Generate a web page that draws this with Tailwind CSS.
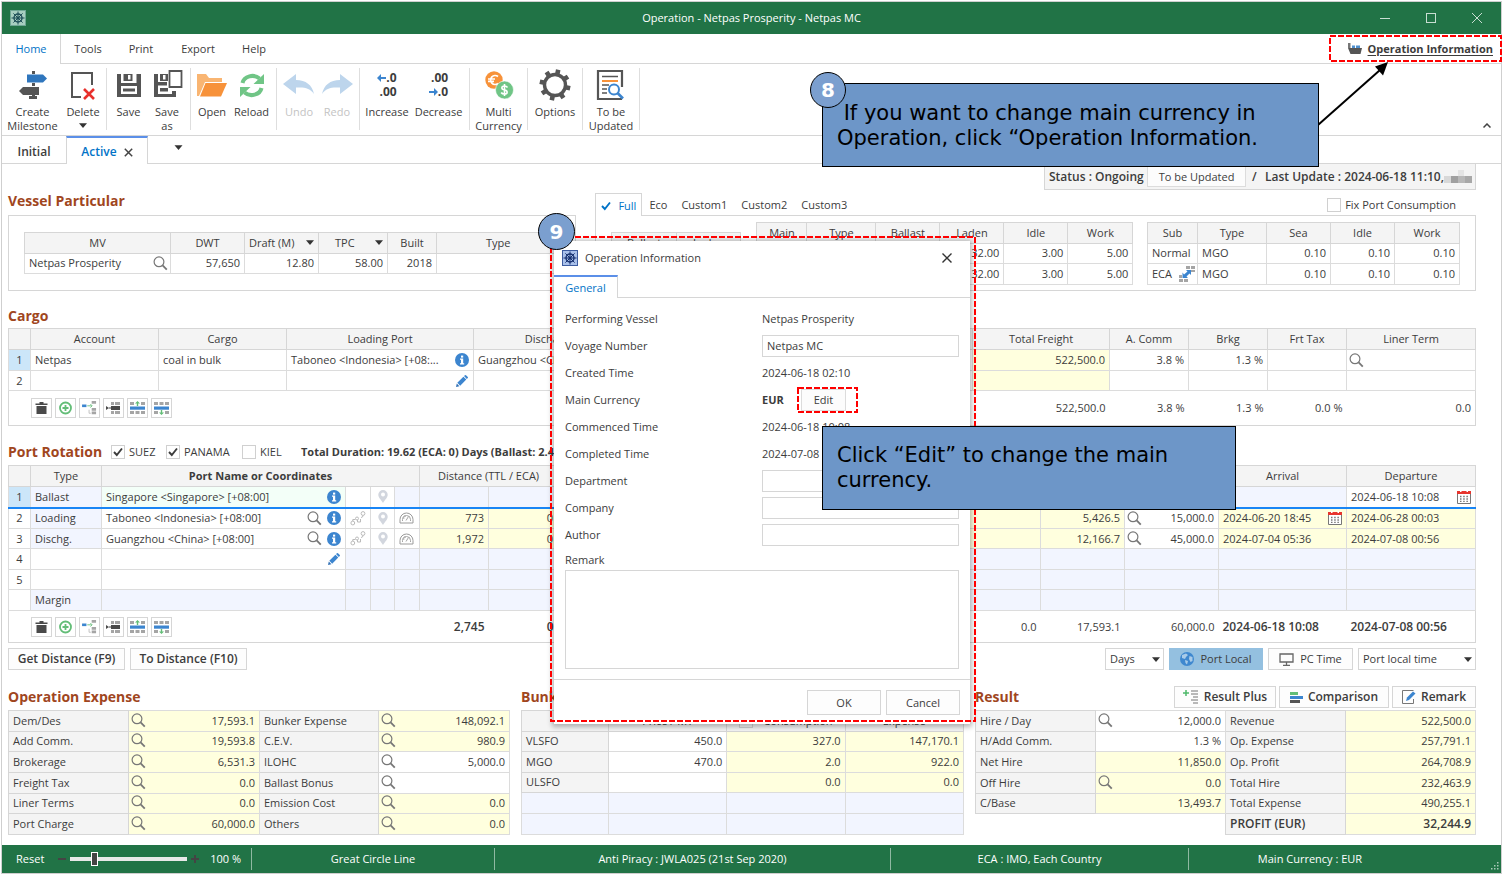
<!DOCTYPE html>
<html lang="en">
<head>
<meta charset="utf-8">
<meta name="viewport" content="width=device-width, initial-scale=1">
<title>Operation - Netpas Prosperity - Netpas MC</title>
<script src="https://cdn.jsdelivr.net/npm/@tailwindcss/browser@4"></script>
</head>
<body class="bg-white font-['Open_Sans','Noto_Sans',sans-serif] text-[11px] leading-4 text-[#3c3c3c]">

<!-- Shared icons -->
<svg class="hidden" aria-hidden="true">
  <symbol id="search" viewBox="0 0 15 15"><circle cx="6" cy="5.8" r="4.9" fill="none" stroke="#777" stroke-width="1.2"/><path d="M9.6 9.4l4.2 4.3" stroke="#777" stroke-width="1.8" fill="none"/></symbol>
  <symbol id="info" viewBox="0 0 14 14"><circle cx="7" cy="7" r="7" fill="#3c85cf"/><rect x="6" y="2.6" width="2.2" height="2" fill="#fff"/><path d="M5 5.6h3.2v4.6h1v1.2H5v-1.2h1V6.8H5z" fill="#fff"/></symbol>
  <symbol id="pencil" viewBox="0 0 12 12"><path d="M0 12l.8-3.4L3.4 11.200z" fill="#2f6fb5"/><path d="M1.300 7.800L7.400 1.700l2.900 2.900-6.100 6.100zM8 1.100L9 .2q.5-.4 1 0l1.800 1.800q.4.500 0 1l-1 1z" fill="#3c85cf"/></symbol>
  <symbol id="trash" viewBox="0 0 14 14"><path d="M5 1h4v1.500h4V4H1V2.500h4zM2 5h10v8H2z" fill="#4a4a4a"/></symbol>
  <symbol id="plus" viewBox="0 0 14 14"><circle cx="7" cy="7" r="5.500" fill="none" stroke="#63bd77" stroke-width="1.800"/><path d="M7 4v6M4 7h6" stroke="#63bd77" stroke-width="1.800"/></symbol>
  <symbol id="split" viewBox="0 0 17 16"><path d="M0 4h5v3H0z" fill="#3c85cf"/><path d="M6 5.500h5M9.500 3.500l2 2-2 2" stroke="#63bd77" fill="none"/><path d="M11 0h5v3h-5zM11 8h5v3h-5zM11 12h5v3h-5z" fill="#a5a5a5"/><path d="M8 10v4h2" stroke="#bbb" fill="none"/></symbol>
  <symbol id="insrow" viewBox="0 0 15 14"><path d="M5 1h3v3H5zM9 1h5v3H9zM5 10h3v3H5zM9 10h5v3H9z" fill="#a5a5a5"/><path d="M5 5h9v4H5z" fill="#4a4a4a"/><path d="M0 5l3 2-3 2zM3 6.500h2v1H3z" fill="#4a4a4a"/></symbol>
  <symbol id="rowup" viewBox="0 0 15 14"><path d="M0 1h4v3H0zM11 1h4v3h-4zM0 10h4v3H0zM5.500 10h4v3h-4zM11 10h4v3h-4z" fill="#a5a5a5"/><path d="M0 5.500h15v3.200H0z" fill="#3c85cf"/><path d="M7.500 0L10 2.500H8.200V5H6.800V2.500H5z" fill="#63bd77"/></symbol>
  <symbol id="rowdown" viewBox="0 0 15 14"><path d="M0 10h4v3H0zM11 10h4v3h-4zM0 1h4v3H0zM5.500 1h4v3h-4zM11 1h4v3h-4z" fill="#a5a5a5"/><path d="M0 5.500h15v3.200H0z" fill="#3c85cf"/><path d="M7.500 14L10 11.500H8.200V9H6.800v2.500H5z" fill="#63bd77"/></symbol>
  <symbol id="route" viewBox="0 0 16 15"><circle cx="2.800" cy="12" r="1.900" fill="none" stroke="#bbb"/><circle cx="7" cy="7.500" r="1.500" fill="none" stroke="#bbb"/><circle cx="13" cy="2.500" r="1.900" fill="none" stroke="#bbb"/><path d="M2.800 10V8.500h2.500M7.500 9v2h3V8M11 6.500q2 0 2-2" fill="none" stroke="#bbb"/></symbol>
  <symbol id="pin" viewBox="0 0 10 13"><path d="M5 0a4.700 4.700 0 0 1 4.700 4.700C9.700 7.500 7 9.500 5 13 3 9.500.3 7.500.3 4.700A4.700 4.700 0 0 1 5 0z" fill="#d2d6de"/><circle cx="5" cy="4.600" r="2" fill="#fff"/></symbol>
  <symbol id="gauge" viewBox="0 0 15 12"><path d="M1 11V7.500a6.500 6.500 0 0 1 13 0V11z" fill="none" stroke="#9b9b9b"/><path d="M3.500 9V7.500a4 4 0 0 1 8 0V9M7 8.500L9.500 4.500M6 3v2M3.500 6h2" fill="none" stroke="#a5a5a5"/></symbol>
  <symbol id="cal" viewBox="0 0 14 14"><path d="M.5 4v9.500h13V4" fill="#fff" stroke="#777"/><path d="M0 1h14v3H0z" fill="#e8352e"/><path d="M3 0h1.500v2H3zM9.500 0H11v2H9.500z" fill="#fff"/><path d="M3 6.500h8M3 9h8M3 11.300h8" stroke="#777" stroke-width="1.300" stroke-dasharray="1.500 1.700"/></symbol>
  <symbol id="tri" viewBox="0 0 8 5"><path d="M0 .3h8L4 5z" fill="#333"/></symbol>
  <symbol id="check" viewBox="0 0 10 10"><path d="M1 5l2.800 3L9 1.500" fill="none" stroke="currentColor" stroke-width="1.900"/></symbol>
  <symbol id="wheel" viewBox="0 0 16 16"><rect x=".5" y=".5" width="15" height="15" fill="#a9c0ea" stroke="#3d5ca0"/><circle cx="8" cy="8" r="4" fill="none" stroke="#152f6e" stroke-width="1.400"/><circle cx="8" cy="8" r="1.500" fill="#152f6e"/><path d="M8 1.500v13M1.500 8h13M3.400 3.400l9.200 9.200M12.600 3.400l-9.200 9.200" stroke="#152f6e" stroke-width="1"/></symbol>
  <symbol id="wheelg" viewBox="0 0 16 16"><rect x=".5" y=".5" width="15" height="15" fill="#a7cfc0" stroke="#6fa895"/><circle cx="8" cy="8" r="4" fill="none" stroke="#1d4e57" stroke-width="1.400"/><circle cx="8" cy="8" r="1.500" fill="#1d4e57"/><path d="M8 1.500v13M1.500 8h13M3.400 3.400l9.200 9.200M12.600 3.400l-9.200 9.200" stroke="#1d4e57" stroke-width="1"/></symbol>
</svg>

<div class="relative min-h-screen p-px">
<div class="flex min-h-[873px] flex-col border border-[#cfcfcf]">

  <!-- Title bar -->
  <header class="flex h-8 items-center bg-[#217346] pl-2 pr-[18px] text-white">
    <svg class="size-4"><use href="#wheelg"/></svg>
    <h1 class="flex-1 pl-[98px] text-center">Operation - Netpas Prosperity - Netpas MC</h1>
    <div class="flex gap-[34px]">
      <button aria-label="Minimize"><svg class="size-3" viewBox="0 0 12 12"><path d="M1 6.500h10" stroke="#c9ded2"/></svg></button>
      <button aria-label="Maximize"><svg class="size-3" viewBox="0 0 12 12"><rect x="1.500" y="1.500" width="9" height="9" fill="none" stroke="#c9ded2"/></svg></button>
      <button aria-label="Close"><svg class="size-3" viewBox="0 0 12 12"><path d="M1 1l10 10M11 1L1 11" stroke="#c9ded2"/></svg></button>
    </div>
  </header>

  <!-- Menu -->
  <nav class="flex h-[30px] items-stretch">
    <button class="w-[59px] border-r border-[#d6d6d6] text-[#0173c7]">Home</button>
    <div class="flex flex-1 items-center border-b border-[#d6d6d6] pr-2">
      <button class="w-[54px]">Tools</button>
      <button class="w-[52px]">Print</button>
      <button class="w-[62px]">Export</button>
      <button class="w-[50px]">Help</button>
      <a href="#info" class="ml-auto flex items-center gap-[5px] font-bold underline underline-offset-2">
        <svg class="h-3 w-4" viewBox="0 0 16 12"><path d="M1 5h14l-1.500 6h-10z" fill="#555"/><path d="M1 0h2.500v5H1z" fill="#777"/><path d="M5 2.500h3V5H5zM9 2.500h4V5H9z" fill="#4f90cf"/></svg>Operation Information</a>
    </div>
  </nav>

  <!-- Toolbar -->
  <div class="flex h-[72px] items-start border-b border-[#d6d6d6] leading-[14px] [&>button]:flex [&>button]:flex-col [&>button]:items-center [&>button]:pt-[5px] [&>i]:mx-[3px] [&>i]:mt-1 [&>i]:h-[62px] [&>i]:w-px [&>i]:bg-[#dedede]">
    <button class="w-[61px]"><svg class="mb-1 size-8" viewBox="0 0 32 32"><path d="M15 2h3v3h-3zM15 14h3v3h-3zM15 25h3v3h-3zM12 27h8v3h-8z" fill="#555"/><path d="M10 5.500h16l4 4-4 4H10z" fill="#2f76bd"/><path d="M22 18H6l-4 4 4 4h16z" fill="#555"/></svg>Create<br>Milestone</button>
    <button class="w-10"><svg class="mb-1 size-8" viewBox="0 0 32 32"><path d="M25 16V4H5v24h9" fill="none" stroke="#555" stroke-width="2"/><path d="M17 20l10 10M27 20L17 30" stroke="#e8302c" stroke-width="2.600"/></svg>Delete<svg class="mt-1 h-[5px] w-2"><use href="#tri"/></svg></button>
    <i></i>
    <button class="w-[37px]"><svg class="mb-1 size-8" viewBox="0 0 32 32"><path d="M4 5h24v23H4z" fill="#555"/><path d="M8 5h15.500v9H8z" fill="#fff"/><path d="M10.500 5h9v7h-9z" fill="#555"/><path d="M15 6h2.500v4.500H15z" fill="#fff"/><path d="M8 17h16v8H8z" fill="#fff"/><path d="M10 19.500h12v3H10z" fill="#555"/></svg>Save</button>
    <button class="w-10"><svg class="mb-1 size-8" viewBox="0 0 32 32"><path d="M3 5h13v17h9v6H3z" fill="#555"/><path d="M7 5h9v8H7z" fill="#fff"/><path d="M9 5h8v7H9z" fill="#555"/><path d="M12 6h2.500v4.500H12z" fill="#fff"/><path d="M7 16.500h10V22h4v3H7z" fill="#fff"/><path d="M9 19h8v3.500H9z" fill="#555"/><path d="M17 0h15v20H17z" fill="#fff"/><path d="M18.500 2h12v16h-12z" fill="none" stroke="#555" stroke-width="1.800"/></svg>Save<br>as</button>
    <i></i>
    <button class="w-9"><svg class="mb-1 size-8" viewBox="0 0 32 32"><path d="M1 5h9l3 4h13v4H9L3 27H1z" fill="#f9b572"/><path d="M9.500 14H31l-6 13.500H4z" fill="#f7923a"/></svg>Open</button>
    <button class="w-[43px]"><svg class="mb-1 size-8" viewBox="0 0 32 32"><path d="M6.500 14a10 8.500 0 0 1 17-4.500M25.500 19a10 8.500 0 0 1-17 4.500" fill="none" stroke="#70c586" stroke-width="4"/><path d="M28 5v10H17.500zM4 28V18h10.500z" fill="#70c586"/></svg>Reload</button>
    <i></i>
    <button class="w-[38px] text-[#c3c3c3]"><svg class="mb-1 size-8" viewBox="0 0 32 32"><path d="M0 15L13 5v6c10 0 16 5 18 14-4-6-9-7-18-6.500V25z" fill="#bdd5ec"/></svg>Undo</button>
    <button class="w-[38px] text-[#c3c3c3]"><svg class="mb-1 size-8" viewBox="0 0 32 32"><path d="M32 15L19 5v6C9 11 3 16 1 25c4-6 9-7 18-6.500V25z" fill="#bdd5ec"/></svg>Redo</button>
    <i></i>
    <button class="w-12"><span class="mb-1 flex h-8 flex-col justify-center text-right text-[12px] font-bold"><span class="flex items-center justify-end"><svg class="h-2 w-[9px]" viewBox="0 0 9 8"><path d="M0 4l4-4v3h5v2H4v3z" fill="#3c85cf"/></svg>.0</span><span>.00</span></span>Increase</button>
    <button class="w-[55px]"><span class="mb-1 flex h-8 flex-col justify-center text-right text-[12px] font-bold"><span>.00</span><span class="flex items-center justify-end"><svg class="h-2 w-[9px]" viewBox="0 0 9 8"><path d="M9 4L5 0v3H0v2h5v3z" fill="#3c85cf"/></svg>.0</span></span>Decrease</button>
    <i></i>
    <button class="w-[51px]"><svg class="mb-1 size-8" viewBox="0 0 32 32"><circle cx="11" cy="11" r="8.700" fill="#f7923a"/><path d="M15 7.500a4.500 4.500 0 1 0 0 7M5 10h7M5 12.300h6" fill="none" stroke="#fff" stroke-width="1.700"/><circle cx="21.500" cy="21" r="9" fill="#70c586" stroke="#fff" stroke-width=".6"/><path d="M24.500 18.500q-1-1.500-3-1.500c-3.500 0-3.500 3.500 0 4s3.500 4 0 4q-2.500 0-3.300-1.500M21.500 15v12" fill="none" stroke="#fff" stroke-width="1.600"/></svg>Multi<br>Currency</button>
    <i></i>
    <button class="w-12"><svg class="mb-1 size-8" viewBox="0 0 32 32"><circle cx="16" cy="16" r="10.500" fill="none" stroke="#555" stroke-width="3.400"/><g stroke="#555" stroke-width="4.600"><path d="M16 .5v5M16 26.500v5" transform="rotate(12 16 16)"/><path d="M16 .5v5M16 26.500v5" transform="rotate(57 16 16)"/><path d="M16 .5v5M16 26.500v5" transform="rotate(102 16 16)"/><path d="M16 .5v5M16 26.500v5" transform="rotate(147 16 16)"/></g></svg>Options</button>
    <i></i>
    <button class="w-[50px]"><svg class="mb-1 size-8" viewBox="0 0 32 32"><path d="M27 18V2H3v28h24" fill="none" stroke="#555" stroke-width="2.200"/><path d="M7 7.500h16M7 16h7M7 20h5M7 24h5" stroke="#555" stroke-width="1.600"/><path d="M7 12h16" stroke="#f7923a" stroke-width="2"/><circle cx="19" cy="20.500" r="5" fill="#fff" stroke="#3c85cf" stroke-width="2"/><path d="M22.500 24l5.500 5.500" stroke="#3c85cf" stroke-width="2.600"/></svg>To be<br>Updated</button>
    <i></i>
    <button class="ml-auto mr-[10px] mt-[54px]" aria-label="Collapse ribbon"><svg class="h-[5px] w-2" viewBox="0 0 8 5"><path d="M.5 4.500L4 1l3.500 3.500" fill="none" stroke="#444" stroke-width="1.500"/></svg></button>
  </div>

  <!-- Document tabs -->
  <div class="flex h-7 items-stretch text-[12px] font-bold">
    <button class="w-16 border-b border-[#d6d6d6] pt-1 font-semibold">Initial</button>
    <div class="flex w-[82px] items-center justify-center gap-[7px] border-x border-t-2 border-x-[#d6d6d6] border-t-[#5b8fe8] pt-0.5 text-[#0173c7]"><button class="font-semibold">Active</button><button aria-label="Close tab"><svg class="size-[9px]" viewBox="0 0 9 9"><path d="M.8.8l7.400 7.400M8.200.8L.8 8.200" stroke="#444" stroke-width="1.500"/></svg></button></div>
    <div class="flex flex-1 items-center border-b border-[#d6d6d6] pl-[26px]"><button aria-label="More tabs"><svg class="mb-1 h-[5px] w-[9px]"><use href="#tri"/></svg></button></div>
  </div>

  <main class="flex flex-1 flex-col pl-1.5 pr-[25px]">
    <!-- Status strip -->
    <div class="ml-auto flex h-[26px] w-[432px] items-center border border-t-0 border-[#d6d6d6] bg-[#f4f4f4] pl-1 text-[12px] font-semibold">
      <span class="w-[98px] whitespace-nowrap">Status : Ongoing</span>
      <button class="h-[21px] w-[99px] border border-[#dcdcdc] bg-[#fcfcfc] text-[11px] font-normal">To be Updated</button>
      <span class="w-[19px] pl-1.5">/</span>
      <span class="whitespace-nowrap">Last Update : 2024-06-18 11:10,</span>
      <svg class="h-3.5 w-7" viewBox="0 0 28 14"><path d="M14 0h6v6h-6z" fill="#e4e4e4"/><path d="M0 6h7v7H0z" fill="#d8d8d8"/><path d="M7 6h7v7H7z" fill="#a0a0a0"/><path d="M14 6h7v7h-7z" fill="#b8b8b8"/><path d="M21 6h7v7h-7z" fill="#a8a8a8"/></svg>
    </div>

    <!-- Vessel -->
    <section class="grid grid-cols-[568fr_880fr] gap-x-[19px]">
      <div>
        <h2 class="flex h-[25px] items-center pb-1 text-[14px] font-bold text-[#a0461e]">Vessel Particular</h2>
        <div class="h-[76px] overflow-hidden border border-[#d6d6d6] px-[15px] py-4">
          <table class="h-[42px] w-full table-fixed border-collapse whitespace-nowrap text-right [&_td]:border [&_td]:border-[#dcdcdc] [&_td]:px-1 [&_th]:border [&_th]:border-[#d6d6d6] [&_th]:bg-[#f4f4f4] [&_th]:text-center [&_th]:font-normal">
            <colgroup><col class="w-[146px]"><col class="w-[74px]"><col class="w-[74px]"><col class="w-[69px]"><col class="w-[49px]"><col></colgroup>
            <tr><th>MV</th><th>DWT</th><th><span class="flex items-center justify-between px-1">Draft (M)<svg class="h-[5px] w-2"><use href="#tri"/></svg></span></th><th><span class="flex items-center justify-between pl-4 pr-1">TPC<svg class="h-[5px] w-2"><use href="#tri"/></svg></span></th><th>Built</th><th>Type</th></tr>
            <tr><td><span class="flex items-center justify-between">Netpas Prosperity<svg class="-mr-0.5 size-[15px]"><use href="#search"/></svg></span></td><td>57,650</td><td>12.80</td><td>58.00</td><td>2018</td><td></td></tr>
          </table>
        </div>
      </div>
      <div>
        <div class="flex h-[25px] items-end">
          <button class="relative z-1 -mb-px flex h-[23px] w-[47px] items-center gap-[7px] border border-b-0 border-[#d6d6d6] bg-white pl-[5px] pt-px text-[#0173c7]"><svg class="size-[10px]"><use href="#check"/></svg>Full</button>
          <div class="flex h-[22px] flex-1 items-center gap-[14px] pl-[7px] pt-px"><button>Eco</button><button>Custom1</button><button>Custom2</button><button>Custom3</button>
            <label class="ml-auto mr-5 flex items-center gap-1"><input type="checkbox" class="size-[14px] appearance-none border border-[#d0d0d0]">Fix Port Consumption</label></div>
        </div>
        <div class="flex h-[76px] items-start overflow-hidden border border-[#d6d6d6] pl-[15px] pr-[15px]">
          <table class="mt-4 w-[130px] table-fixed border-collapse [&_td]:border [&_td]:border-[#dcdcdc] [&_th]:border [&_th]:border-[#d6d6d6] [&_th]:bg-[#f4f4f4] [&_th]:font-normal"><tr class="h-[21px]"><th>Ballast</th><th>Laden</th></tr><tr class="h-[21px]"><td></td><td></td></tr></table>
          <table class="ml-[15px] mt-1.5 h-[63px] w-[377px] table-fixed border-collapse text-right [&_td]:border [&_td]:border-[#dcdcdc] [&_td]:px-1 [&_th]:border [&_th]:border-[#d6d6d6] [&_th]:bg-[#f4f4f4] [&_th]:font-normal">
            <colgroup><col class="w-[50px]"><col class="w-[69px]"><col class="w-16"><col class="w-16"><col class="w-16"><col></colgroup>
            <tr><th class="text-center">Main</th><th class="text-center">Type</th><th class="text-center">Ballast</th><th class="text-center">Laden</th><th class="text-center">Idle</th><th class="text-center">Work</th></tr>
            <tr><td></td><td></td><td></td><td>32.00</td><td>3.00</td><td>5.00</td></tr>
            <tr><td></td><td></td><td></td><td>32.00</td><td>3.00</td><td>5.00</td></tr>
          </table>
          <table class="ml-auto mt-1.5 h-[63px] w-[313px] table-fixed border-collapse whitespace-nowrap text-right [&_td]:border [&_td]:border-[#dcdcdc] [&_td]:px-1 [&_th]:border [&_th]:border-[#d6d6d6] [&_th]:bg-[#f4f4f4] [&_th]:text-center [&_th]:font-normal">
            <colgroup><col class="w-[50px]"><col class="w-[69px]"><col class="w-16"><col class="w-16"><col></colgroup>
            <tr><th>Sub</th><th>Type</th><th>Sea</th><th>Idle</th><th>Work</th></tr>
            <tr><td class="text-left">Normal</td><td class="text-left">MGO</td><td>0.10</td><td>0.10</td><td>0.10</td></tr>
            <tr><td><span class="flex items-center justify-between">ECA<svg class="-mr-0.5 size-4" viewBox="0 0 16 16"><path d="M7 0h4v3H7zM12 0h4v3h-4zM12 4h4v2h-4zM0 9h3v3H0zM0 13h4v3H0zM5 13h4v3H5z" fill="#a5a5a5"/><path d="M7 4h5v5l-1.500-1.500L7.500 10.500 9 12H3.500V6.500L5 8.500l3.500-3z" fill="#3c85cf"/></svg></span></td><td class="text-left">MGO</td><td>0.10</td><td>0.10</td><td>0.10</td></tr>
          </table>
        </div>
      </div>
    </section>

    <!-- Cargo -->
    <section>
      <h2 class="mb-0.5 mt-[15px] h-5 text-[14px] font-bold leading-5 text-[#a0461e]">Cargo</h2>
      <table class="w-full table-fixed border-collapse overflow-hidden whitespace-nowrap border border-[#d6d6d6] text-right [&_tbody_td]:border [&_tbody_td]:border-[#dcdcdc] [&_td]:overflow-hidden [&_td]:px-1 [&_th]:border [&_th]:border-[#d6d6d6] [&_th]:bg-[#f4f4f4] [&_th]:text-center [&_th]:font-normal">
        <colgroup><col class="w-[22px]"><col class="w-32"><col class="w-[128px]"><col class="w-[187px]"><col class="w-[187px]"><col><col class="w-[137px]"><col class="w-[79px]"><col class="w-[79px]"><col class="w-[79px]"><col class="w-[129px]"></colgroup>
        <thead><tr class="h-[21px]"><th></th><th>Account</th><th>Cargo</th><th>Loading Port</th><th>Discharging Port</th><th></th><th>Total Freight</th><th>A. Comm</th><th>Brkg</th><th>Frt Tax</th><th>Liner Term</th></tr></thead>
        <tbody>
          <tr class="h-[21px]"><td class="bg-[#cce6f9] text-center">1</td><td class="text-left">Netpas</td><td class="text-left">coal in bulk</td><td><span class="flex items-center justify-between">Taboneo &lt;Indonesia&gt; [+08:...<svg class="size-[14px]"><use href="#info"/></svg></span></td><td class="text-left">Guangzhou &lt;China&gt; [+08:00]</td><td></td><td class="bg-[#ffffde]">522,500.0</td><td>3.8 %</td><td>1.3 %</td><td></td><td><svg class="-ml-0.5 size-[15px]"><use href="#search"/></svg></td></tr>
          <tr class="h-5"><td class="text-center">2</td><td></td><td></td><td><svg class="ml-auto mr-px size-3"><use href="#pencil"/></svg></td><td></td><td></td><td class="bg-[#ffffde]"></td><td></td><td></td><td></td><td></td></tr>
        </tbody>
        <tfoot><tr class="h-[35px]"><td></td><td colspan="2" class="!px-0"><span class="flex gap-[3px] [&_button]:grid [&_button]:h-5 [&_button]:w-[21px] [&_button]:place-items-center [&_button]:border [&_button]:border-[#d6d6d6] [&_svg]:h-[14px] [&_svg]:w-[15px]"><button aria-label="Delete row"><svg><use href="#trash"/></svg></button><button aria-label="Add row"><svg><use href="#plus"/></svg></button><button aria-label="Split row"><svg><use href="#split"/></svg></button><button aria-label="Insert row"><svg><use href="#insrow"/></svg></button><button aria-label="Move up"><svg><use href="#rowup"/></svg></button><button aria-label="Move down"><svg><use href="#rowdown"/></svg></button></span></td><td></td><td></td><td></td><td>522,500.0</td><td>3.8 %</td><td>1.3 %</td><td>0.0 %</td><td>0.0</td></tr></tfoot>
      </table>
    </section>

    <!-- Port rotation -->
    <section>
      <div class="mb-[3px] mt-4 flex h-5 items-center">
        <h2 class="w-[103px] text-[14px] font-bold leading-5 text-[#a0461e]">Port Rotation</h2>
        <label class="flex w-[55px] items-center gap-1"><span class="grid place-items-center"><input type="checkbox" checked class="size-[14px] appearance-none border border-[#d0d0d0] [grid-area:1/1]"><svg class="pointer-events-none size-[10px] [grid-area:1/1]"><use href="#check"/></svg></span>SUEZ</label>
        <label class="flex w-[76px] items-center gap-1"><span class="grid place-items-center"><input type="checkbox" checked class="size-[14px] appearance-none border border-[#d0d0d0] [grid-area:1/1]"><svg class="pointer-events-none size-[10px] [grid-area:1/1]"><use href="#check"/></svg></span>PANAMA</label>
        <label class="flex w-[59px] items-center gap-1"><input type="checkbox" class="size-[14px] appearance-none border border-[#d0d0d0]">KIEL</label>
        <span class="font-bold">Total Duration: 19.62 (ECA: 0) Days (Ballast: 2.44)</span>
      </div>
      <table class="w-full table-fixed border-collapse whitespace-nowrap border border-[#d6d6d6] text-right [&_tbody_td]:border [&_tbody_td]:border-[#dcdcdc] [&_td]:px-1 [&_th]:border [&_th]:border-[#d6d6d6] [&_th]:bg-[#f4f4f4] [&_th]:text-center [&_th]:font-normal">
        <colgroup><col class="w-[22px]"><col class="w-[71px]"><col class="w-[244px]"><col class="w-[25px]"><col class="w-6"><col class="w-[25px]"><col class="w-[69px]"><col class="w-[69px]"><col><col class="w-[84px]"><col class="w-[94px]"><col class="w-32"><col class="w-[129px]"></colgroup>
        <thead><tr class="h-[21px]"><th></th><th>Type</th><th colspan="4" class="!font-bold">Port Name or Coordinates</th><th colspan="2">Distance (TTL / ECA)</th><th></th><th></th><th></th><th>Arrival</th><th>Departure</th></tr></thead>
        <tbody>
          <tr class="h-[21px] bg-[#f2f5ff] [&>td]:!border-b-2 [&>td]:!border-b-[#1985f5]"><td class="bg-[#cce6f9] text-center">1</td><td class="text-left">Ballast</td><td class="bg-[#f3fff8]"><span class="flex items-center justify-between">Singapore &lt;Singapore&gt; [+08:00]<svg class="size-[14px]"><use href="#info"/></svg></span></td><td class="bg-white"></td><td class="bg-white"><svg class="mx-auto h-[13px] w-[10px]"><use href="#pin"/></svg></td><td></td><td></td><td></td><td></td><td></td><td></td><td></td><td class="bg-white"><span class="flex items-center justify-between">2024-06-18 10:08<svg class="size-[14px]"><use href="#cal"/></svg></span></td></tr>
          <tr class="h-[21px]"><td class="text-center">2</td><td class="bg-[#f2f5ff] text-left">Loading</td><td><span class="flex items-center gap-[5px]"><span class="mr-auto">Taboneo &lt;Indonesia&gt; [+08:00]</span><svg class="size-[15px]"><use href="#search"/></svg><svg class="size-[14px]"><use href="#info"/></svg></span></td><td><svg class="h-[15px] w-4"><use href="#route"/></svg></td><td><svg class="mx-auto h-[13px] w-[10px]"><use href="#pin"/></svg></td><td><svg class="h-3 w-[15px]"><use href="#gauge"/></svg></td><td class="bg-[#ffffde]">773</td><td class="bg-[#ffffde]">0</td><td class="bg-[#ffffde]"></td><td class="bg-[#ffffde]">5,426.5</td><td><span class="flex items-center justify-between"><svg class="-ml-0.5 size-[15px]"><use href="#search"/></svg>15,000.0</span></td><td class="bg-[#ffffde]"><span class="flex items-center justify-between">2024-06-20 18:45<svg class="size-[14px]"><use href="#cal"/></svg></span></td><td class="bg-[#ffffde] text-left">2024-06-28 00:03</td></tr>
          <tr class="h-5"><td class="text-center">3</td><td class="bg-[#f2f5ff] text-left">Dischg.</td><td><span class="flex items-center gap-[5px]"><span class="mr-auto">Guangzhou &lt;China&gt; [+08:00]</span><svg class="size-[15px]"><use href="#search"/></svg><svg class="size-[14px]"><use href="#info"/></svg></span></td><td><svg class="h-[15px] w-4"><use href="#route"/></svg></td><td><svg class="mx-auto h-[13px] w-[10px]"><use href="#pin"/></svg></td><td><svg class="h-3 w-[15px]"><use href="#gauge"/></svg></td><td class="bg-[#ffffde]">1,972</td><td class="bg-[#ffffde]">0</td><td class="bg-[#ffffde]"></td><td class="bg-[#ffffde]">12,166.7</td><td><span class="flex items-center justify-between"><svg class="-ml-0.5 size-[15px]"><use href="#search"/></svg>45,000.0</span></td><td class="bg-[#ffffde] text-left">2024-07-04 05:36</td><td class="bg-[#ffffde] text-left">2024-07-08 00:56</td></tr>
          <tr class="h-[21px] bg-[#f2f5ff]"><td class="bg-white text-center">4</td><td class="bg-white"></td><td class="bg-white"><svg class="ml-auto mr-px size-3"><use href="#pencil"/></svg></td><td></td><td></td><td></td><td></td><td></td><td></td><td></td><td></td><td></td><td></td></tr>
          <tr class="h-5 bg-[#f2f5ff]"><td class="bg-white text-center">5</td><td class="bg-white"></td><td class="bg-white"></td><td></td><td></td><td></td><td></td><td></td><td></td><td></td><td></td><td></td><td></td></tr>
          <tr class="h-[21px] bg-[#f2f5ff]"><td class="bg-white"></td><td class="text-left">Margin</td><td></td><td></td><td></td><td></td><td></td><td></td><td></td><td></td><td></td><td></td><td></td></tr>
        </tbody>
        <tfoot><tr class="h-8"><td></td><td colspan="2" class="!px-0"><span class="flex gap-[3px] [&_button]:grid [&_button]:h-5 [&_button]:w-[21px] [&_button]:place-items-center [&_button]:border [&_button]:border-[#d6d6d6] [&_svg]:h-[14px] [&_svg]:w-[15px]"><button aria-label="Delete row"><svg><use href="#trash"/></svg></button><button aria-label="Add row"><svg><use href="#plus"/></svg></button><button aria-label="Split row"><svg><use href="#split"/></svg></button><button aria-label="Insert row"><svg><use href="#insrow"/></svg></button><button aria-label="Move up"><svg><use href="#rowup"/></svg></button><button aria-label="Move down"><svg><use href="#rowdown"/></svg></button></span></td><td></td><td></td><td></td><td class="text-[12px] font-semibold">2,745</td><td class="text-[12px] font-semibold">0</td><td>0.0</td><td>17,593.1</td><td>60,000.0</td><td class="text-left text-[12px] font-semibold">2024-06-18 10:08</td><td class="text-left text-[12px] font-semibold">2024-07-08 00:56</td></tr></tfoot>
      </table>
    </section>

    <!-- Actions under the port table -->
    <div class="mt-[5px] flex h-[22px] items-stretch gap-[5px]">
      <button class="w-[117px] border border-[#d6d6d6] bg-[#fdfdfd] text-[12px] font-semibold">Get Distance (F9)</button>
      <button class="w-[117px] border border-[#d6d6d6] bg-[#fdfdfd] text-[12px] font-semibold">To Distance (F10)</button>
      <div class="relative ml-auto flex"><select aria-label="Duration unit" class="w-[59px] appearance-none border border-[#d6d6d6] bg-white pl-1"><option>Days</option></select><svg class="pointer-events-none absolute right-1 top-[9px] h-[5px] w-2"><use href="#tri"/></svg></div>
      <button class="flex w-[94px] items-center justify-center gap-1.5 bg-[#94c0e0]"><svg class="size-[14px]" viewBox="0 0 14 14"><circle cx="7" cy="7" r="7" fill="#3f88cf"/><path d="M2 3l4-1.500 2 1.500-2 2-1 2-3-1zM5 8l3 1-1 3.500L5.500 11zM9.500 4l3 1v4l-2 1-1.500-3z" fill="#a9cbe8"/></svg>Port Local</button>
      <button class="flex w-[85px] items-center justify-center gap-1.5 border border-[#d6d6d6] bg-[#fdfdfd]"><svg class="h-[13px] w-[15px]" viewBox="0 0 15 13"><path d="M1 1h13v8H1zM7.500 9v3M4 12.300h7" fill="none" stroke="#666" stroke-width="1.300"/></svg>PC Time</button>
      <div class="relative flex"><select aria-label="Time basis" class="w-[118px] appearance-none border border-[#d6d6d6] bg-white pl-1"><option>Port local time</option></select><svg class="pointer-events-none absolute right-1 top-[9px] h-[5px] w-2"><use href="#tri"/></svg></div>
    </div>

    <!-- Summary tables -->
    <div class="mt-[16px] grid grid-cols-[502fr_443fr_501fr] gap-x-[11px] [&_h2]:text-[14px] [&_h2]:font-bold [&_h2]:leading-[22px] [&_h2]:text-[#a0461e] [&_table]:h-[125px] [&_table]:w-full [&_table]:table-fixed [&_table]:border-collapse [&_table]:whitespace-nowrap [&_td]:border [&_td]:border-[#dcdcdc] [&_td]:px-1 [&_td]:text-right [&_th]:border [&_th]:border-[#d6d6d6] [&_th]:bg-[#f4f4f4] [&_th]:px-1 [&_th]:text-left [&_th]:font-normal">
      <section>
        <h2 class="mb-0.5 h-[22px]">Operation Expense</h2>
        <table class="bg-[#ffffde] [&_span]:flex [&_span]:justify-between [&_svg]:-ml-0.5 [&_svg]:size-[15px]">
          <colgroup><col class="w-[120px]"><col><col class="w-[119px]"><col></colgroup>
          <tr><th>Dem/Des</th><td><span><svg><use href="#search"/></svg>17,593.1</span></td><th>Bunker Expense</th><td><span><svg><use href="#search"/></svg>148,092.1</span></td></tr>
          <tr><th>Add Comm.</th><td><span><svg><use href="#search"/></svg>19,593.8</span></td><th>C.E.V.</th><td><span><svg><use href="#search"/></svg>980.9</span></td></tr>
          <tr><th>Brokerage</th><td><span><svg><use href="#search"/></svg>6,531.3</span></td><th>ILOHC</th><td class="bg-white"><span><svg><use href="#search"/></svg>5,000.0</span></td></tr>
          <tr><th>Freight Tax</th><td><span><svg><use href="#search"/></svg>0.0</span></td><th>Ballast Bonus</th><td class="bg-white"><span><svg><use href="#search"/></svg></span></td></tr>
          <tr><th>Liner Terms</th><td><span><svg><use href="#search"/></svg>0.0</span></td><th>Emission Cost</th><td><span><svg><use href="#search"/></svg>0.0</span></td></tr>
          <tr><th>Port Charge</th><td><span><svg><use href="#search"/></svg>60,000.0</span></td><th>Others</th><td><span><svg><use href="#search"/></svg>0.0</span></td></tr>
        </table>
      </section>
      <section>
        <h2 class="mb-0.5 h-[22px]">Bunker Expense</h2>
        <table>
          <colgroup><col class="w-[87px]"><col><col><col></colgroup>
          <tr><th></th><th class="!text-center">Price / MT</th><th><label class="flex items-center justify-center gap-2.5"><input type="checkbox" class="size-[14px] appearance-none border border-[#d0d0d0]">Consumption</label></th><th class="!text-center">Expense</th></tr>
          <tr><th>VLSFO</th><td>450.0</td><td class="bg-[#ffffde]">327.0</td><td class="bg-[#ffffde]">147,170.1</td></tr>
          <tr><th>MGO</th><td>470.0</td><td class="bg-[#ffffde]">2.0</td><td class="bg-[#ffffde]">922.0</td></tr>
          <tr><th>ULSFO</th><td></td><td class="bg-[#ffffde]">0.0</td><td class="bg-[#ffffde]">0.0</td></tr>
          <tr class="h-[21px] bg-[#f2f5ff]"><td></td><td></td><td></td><td></td></tr>
          <tr class="h-[21px] bg-[#f2f5ff]"><td></td><td></td><td></td><td></td></tr>
        </table>
      </section>
      <section>
        <div class="mb-0.5 flex h-[22px] items-stretch gap-[3px] [&_button]:flex [&_button]:items-center [&_button]:justify-center [&_button]:gap-[5px] [&_button]:border [&_button]:border-[#d6d6d6] [&_button]:bg-[#fdfdfd] [&_button]:text-[12px] [&_button]:font-semibold">
          <h2 class="mr-auto">Result</h2>
          <button class="w-[102px]"><svg class="h-[14px] w-4" viewBox="0 0 16 14"><path d="M3 0v6M0 3h6" stroke="#4fb96b" stroke-width="1.500"/><path d="M8 1h7M8 4h7M10 7h5M8 10h7M10 13h5" stroke="#777" stroke-width="1.200"/></svg>Result Plus</button>
          <button class="w-[110px]"><svg class="h-[11px] w-[13px]" viewBox="0 0 13 11"><path d="M0 0h8v3H0z" fill="#63bd77"/><path d="M0 4h13v3H0z" fill="#3c85cf"/><path d="M0 8h10v3H0z" fill="#555"/></svg>Comparison</button>
          <button class="w-[84px]"><svg class="size-[14px]" viewBox="0 0 14 14"><path d="M11.500 9v4.500H.5V.5h11" fill="none" stroke="#777"/><path d="M4 11l1-3.500L11 1.500l2.500 2L7 10z" fill="#3c85cf"/></svg>Remark</button>
        </div>
        <table>
          <colgroup><col class="w-[120px]"><col class="w-[130px]"><col class="w-[120px]"><col></colgroup>
          <tr><th>Hire / Day</th><td><span class="flex justify-between"><svg class="-ml-0.5 size-[15px]"><use href="#search"/></svg>12,000.0</span></td><th>Revenue</th><td class="bg-[#ffffde]">522,500.0</td></tr>
          <tr><th>H/Add Comm.</th><td>1.3 %</td><th>Op. Expense</th><td class="bg-[#ffffde]">257,791.1</td></tr>
          <tr><th>Net Hire</th><td class="bg-[#ffffde]">11,850.0</td><th>Op. Profit</th><td class="bg-[#ffffde]">264,708.9</td></tr>
          <tr><th>Off Hire</th><td class="bg-[#ffffde]"><span class="flex justify-between"><svg class="-ml-0.5 size-[15px]"><use href="#search"/></svg>0.0</span></td><th>Total Hire</th><td class="bg-[#ffffde]">232,463.9</td></tr>
          <tr><th>C/Base</th><td class="bg-[#ffffde]">13,493.7</td><th>Total Expense</th><td class="bg-[#ffffde]">490,255.1</td></tr>
          <tr><td colspan="2" class="!border-0"></td><th class="text-[12px] !font-semibold">PROFIT (EUR)</th><td class="bg-[#ffffde] text-[12px] font-semibold">32,244.9</td></tr>
        </table>
      </section>
    </div>
  </main>

  <!-- Status bar -->
  <footer class="flex h-7 items-stretch bg-[#217346] py-[3px] text-white [&>span]:flex [&>span]:items-center [&>span]:justify-center [&>span]:border-l [&>span]:border-[#8fb9a2]">
    <div class="flex w-[249px] items-center pl-3.5">
      <button class="w-[42px] text-left">Reset</button>
      <svg class="mr-1 size-2" viewBox="0 0 8 8"><path d="M0 4h8" stroke="#444" stroke-width="2"/></svg>
      <input type="range" min="0" max="100" value="19" aria-label="Zoom" class="h-1 w-[117px] appearance-none bg-[#e8e8e8] [&::-webkit-slider-thumb]:h-[14px] [&::-webkit-slider-thumb]:w-[7px] [&::-webkit-slider-thumb]:appearance-none [&::-webkit-slider-thumb]:border [&::-webkit-slider-thumb]:border-white [&::-webkit-slider-thumb]:bg-[#444]">
      <svg class="ml-1 size-2" viewBox="0 0 8 8"><path d="M0 4h8M4 0v8" stroke="#444" stroke-width="2"/></svg>
      <span class="ml-auto mr-2.5">100 %</span>
    </div>
    <span class="w-[243px]">Great Circle Line</span>
    <span class="flex-1">Anti Piracy : JWLA025 (21st Sep 2020)</span>
    <span class="w-[298px]">ECA : IMO, Each Country</span>
    <span class="w-[243px]">Main Currency : EUR</span>
    <div class="flex w-[70px] items-end justify-end pr-0.5"><svg class="size-2" viewBox="0 0 8 8"><path d="M6 0h1.500v1.500H6zM6 3h1.500v1.500H6zM6 6h1.500v1.500H6zM3 3h1.500v1.500H3zM3 6h1.500v1.500H3zM0 6h1.500v1.500H0z" fill="#a9c9b7"/></svg></div>
  </footer>
</div>

<!-- Operation Information dialog -->
<div role="dialog" aria-labelledby="dlg-title" class="absolute left-[554px] top-[241px] w-[416px] bg-white shadow-[0_1px_5px_2px_rgba(0,0,0,0.28)]">
  <div class="flex h-[34px] items-center pl-2 pr-[18px]">
    <svg class="size-4"><use href="#wheel"/></svg>
    <h2 id="dlg-title" class="flex-1 pl-[7px]">Operation Information</h2>
    <button aria-label="Close dialog"><svg class="size-[10px]" viewBox="0 0 10 10"><path d="M.5.5l9 9M9.500.5l-9 9" stroke="#333" stroke-width="1.400"/></svg></button>
  </div>
  <div class="flex h-[23px]"><button class="w-16 border-r border-t-2 border-r-[#d6d6d6] border-t-[#5b8fe8] text-[#0173c7]">General</button><div class="flex-1 border-b border-[#d6d6d6]"></div></div>
  <form class="border-b border-[#d6d6d6] px-[11px] pb-[10px] pt-[7px]">
    <div class="grid auto-rows-[27px] grid-cols-2 items-center [&_input]:h-[22px] [&_input]:w-full [&_input]:border [&_input]:border-[#d6d6d6] [&_input]:px-1">
      <span>Performing Vessel</span><span>Netpas Prosperity</span>
      <label for="voy">Voyage Number</label><input id="voy" type="text" value="Netpas MC">
      <span>Created Time</span><span>2024-06-18 02:10</span>
      <span>Main Currency</span><span class="flex items-center"><b class="w-[39px]">EUR</b><button type="button" class="h-[22px] w-[45px] border border-[#dcdcdc] bg-[#fcfcfc]">Edit</button></span>
      <span>Commenced Time</span><span>2024-06-18 10:08</span>
      <span>Completed Time</span><span>2024-07-08 00:56</span>
      <label for="dep">Department</label><input id="dep" type="text">
      <label for="com">Company</label><input id="com" type="text">
      <label for="aut">Author</label><input id="aut" type="text">
    </div>
    <label for="rem" class="block h-[22px] leading-[24px]">Remark</label>
    <textarea id="rem" class="block h-[99px] w-full resize-none border border-[#d6d6d6]"></textarea>
  </form>
  <div class="flex justify-end gap-[5px] pb-[9px] pr-[10px] pt-[10px]"><button class="h-[25px] w-[74px] border border-[#d6d6d6] bg-[#fdfdfd]">OK</button><button class="h-[25px] w-[74px] border border-[#d6d6d6] bg-[#fdfdfd]">Cancel</button></div>
</div>

<!-- Dashed highlights and arrow -->
<svg class="pointer-events-none absolute left-0 top-0 h-[875px] w-[1503px]" viewBox="0 0 1503 875" fill="none">
  <g stroke="#f00" stroke-width="2" stroke-dasharray="6 2"><rect x="551" y="237" width="424" height="484"/><rect x="798" y="388" width="59" height="24"/><rect x="1330" y="36" width="171" height="25"/></g>
  <path d="M1318 125L1380 70" stroke="#000" stroke-width="2"/><path d="M1388 62l-13 4.500 8 9z" fill="#000"/>
</svg>

<!-- Callouts -->
<div class="absolute left-[822px] top-[83px] h-[84px] w-[497px] whitespace-pre border border-black bg-[#6d96c8] pl-[14px] pt-[17px] font-['DejaVu_Sans',sans-serif] text-[21px] leading-[25px] text-black"><p> If you want to change main currency in</p><p>Operation, click “Operation Information.</p></div>
<div class="absolute left-[810px] top-[72px] grid size-9 place-items-center rounded-full border border-black bg-[#7b9fcf] font-['DejaVu_Sans',sans-serif] text-[20px] font-bold text-white">8</div>
<div class="absolute left-[822px] top-[426px] h-[84px] w-[414px] border border-black bg-[#6d96c8] pl-[14px] pt-4 font-['DejaVu_Sans',sans-serif] text-[21px] leading-[25px] text-black"><p>Click “Edit” to change the main</p><p>currency.</p></div>
<div class="absolute left-[538px] top-[213px] grid size-[37px] place-items-center rounded-full border border-black bg-[#7b9fcf] font-['DejaVu_Sans',sans-serif] text-[20px] font-bold text-white">9</div>
</div>
</body>
</html>
